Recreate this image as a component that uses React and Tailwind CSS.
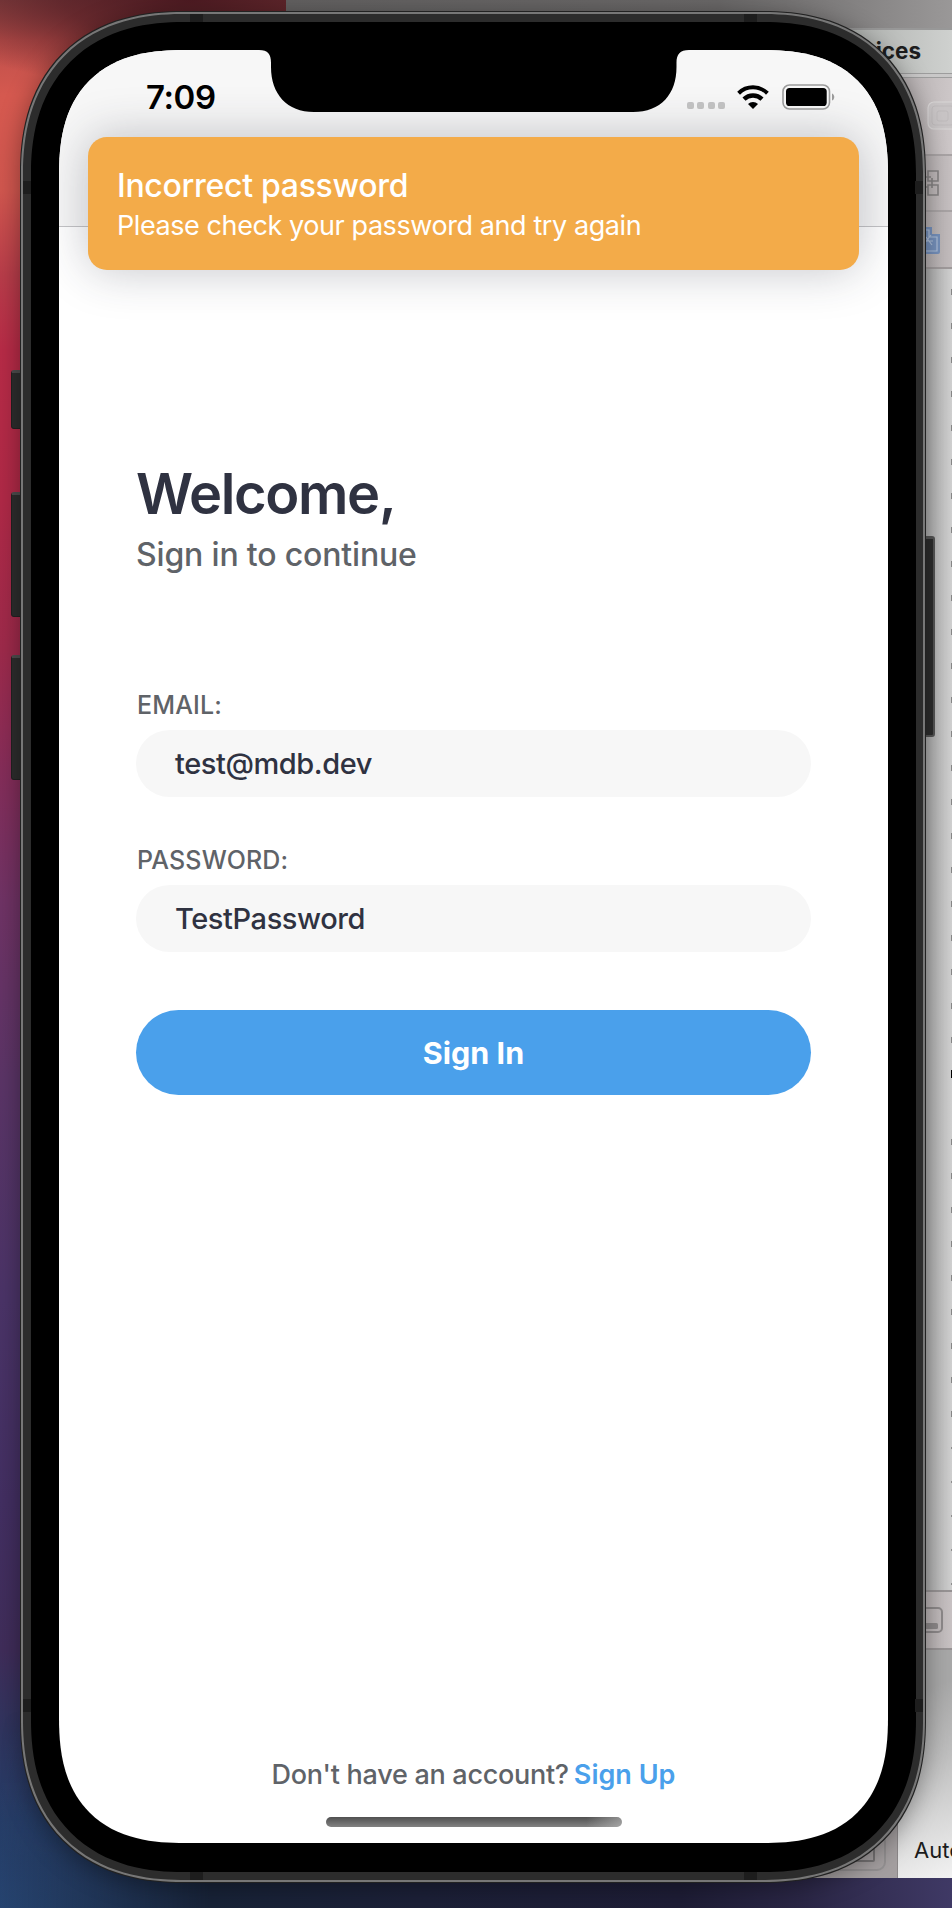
const GUTTER_ROWS = Array.from({ length: 39 }, (_, i) => i);

function Desktop() {
  return (
    <div className="absolute inset-0 bg-[linear-gradient(180deg,#8a4444_0px,#bd4f4b_40px,#d5594f_95px,#d2574f_190px,#b93d4a_275px,#b82b47_350px,#b02947_500px,#9e2a4b_650px,#852d59_770px,#703365_900px,#5b3567_1080px,#4b3468_1300px,#432f62_1500px,#402d5a_1650px,#30355f_1730px,#263d67_1820px,#264470_1908px)]">
      <div className="h-full w-full bg-[radial-gradient(ellipse_280px_90px_at_190px_0px,#4e1b22_0%,#4e1b22b0_45%,#4e1b2200_100%)]" />
      <div className="absolute inset-x-0 bottom-0 h-[200px] bg-[linear-gradient(90deg,#18233800_0px,#182338_210px,#1c2038_420px,#1e1d36_680px,#2a2645_800px,#3f3965_952px)] [mask-image:linear-gradient(180deg,transparent,black_75%)]" />
    </div>
  );
}

function EditorWindow() {
  return (
    <div className="absolute left-[286px] top-0 flex h-[1878px] w-[666px] flex-col overflow-hidden bg-[#d6d6d6] font-['Inter','Liberation_Sans',sans-serif]">
      <div className="h-[30px] shrink-0 border-b-2 border-[#989898] bg-[linear-gradient(90deg,#636161_0%,#6a6868_65%,#838181_85%,#9a9898_100%)]" />
      <div className="flex h-[44px] shrink-0 items-center justify-end border-b border-[#9d9d9d] bg-[linear-gradient(90deg,#a5a8a5_80%,#cfd1cf_100%)] pb-[2px] pr-[31px] text-[22.5px] font-bold text-[#1d1d1d]">
        Devices
      </div>
      <div className="h-[4px] shrink-0 border-b border-[#9d9d9d] bg-[#c9c8c8]" />
      <div className="flex h-[78px] shrink-0 items-center justify-end border-b-2 border-[#a8a3a4] bg-[linear-gradient(90deg,#a9a3a4_88%,#cdc7c8_100%)]">
        <svg className="h-[30px] w-[26px]" viewBox="0 0 26 30" fill="none" stroke="#d8d5d5">
          <rect x="2" y="1" width="30" height="27" rx="6" strokeWidth="1.2" fill="#c8c4c5" />
          <rect x="6" y="5" width="22" height="19" rx="3" stroke="#bebabb" />
          <rect x="11" y="10" width="11" height="10" rx="2" stroke="#bebabb" />
        </svg>
      </div>
      <div className="flex h-[56px] shrink-0 items-center justify-end border-b-2 border-[#a8a3a4] bg-[linear-gradient(90deg,#a9a3a4_92%,#c6c0c1_100%)] pr-[13px]">
        <svg className="h-[26px] w-[16px]" viewBox="0 0 16 26" fill="none" stroke="#858283" strokeWidth="1.6">
          <path d="M5 1h10v10H5zM5 15h10v10H5zM9 8v10M0 7h8M0 17h5" />
        </svg>
      </div>
      <div className="flex h-[57px] shrink-0 items-center justify-end border-b-2 border-[#9f9a9b] bg-[linear-gradient(90deg,#a9a3a4_92%,#c2bcbd_100%)] pr-[12px]">
        <svg className="h-[28px] w-[18px]" viewBox="0 0 18 28">
          <path d="M0 1h10v7h8v18a2 2 0 0 1-2 2H0z" fill="#7590bb" />
          <path d="M0 4h7v7h8v14H0M2 18l7-9M4 11l6 8M1 15h10" fill="none" stroke="#aebfd9" strokeWidth="1.2" />
        </svg>
      </div>
      <div className="flex h-[1321px] shrink-0 flex-col items-end bg-[linear-gradient(90deg,#a8a8a8_640px,#b4b4b4_646px,#d0d0d0_666px)] pt-[6px]">
        {GUTTER_ROWS.map((i) => (
          <div key={i} className="flex h-[34px] w-[1px] shrink-0 items-center">
            <div className={i === 23 ? "h-[8px] w-full bg-black" : i === 24 ? "h-0" : i > 33 ? "h-[2px] w-full bg-[#8f8f8f]" : "h-[6px] w-full bg-[#868686]"} />
          </div>
        ))}
      </div>
      <div className="flex h-[60px] shrink-0 items-center justify-end border-y-2 border-[#979394] bg-[linear-gradient(90deg,#a8a2a3_92%,#c8c2c3_100%)] pr-[9px]">
        <svg className="h-[26px] w-[32px]" viewBox="0 0 32 26">
          <rect x="1" y="1" width="30" height="24" rx="4" fill="none" stroke="#8d898a" strokeWidth="2" />
          <rect x="5" y="16" width="22" height="6" rx="1.5" fill="#8d898a" />
        </svg>
      </div>
      <div className="flex grow bg-[linear-gradient(90deg,#a8a8a8_640px,#dcdcdc_666px)]">
        <div className="flex w-[612px] shrink-0 items-end justify-end border-r border-[#8b8788] bg-[#a49fa0] pb-[7px] pr-[11px]">
          <div className="flex h-[38px] w-[60px] items-center justify-end rounded-[9px] border-2 border-[#939091] pr-[9px]">
            <div className="h-[20px] w-[24px] rounded-[2px] border-2 border-[#777475]" />
          </div>
        </div>
        <div className="flex min-w-0 grow items-end overflow-hidden whitespace-nowrap bg-[linear-gradient(160deg,#a8a8a8_20%,#bfbfbf_50%,#f2f2f2_100%)] pb-[13px] pl-[16px] text-[22px] leading-[30px] text-[#1b1b1b]">
          Auto
        </div>
      </div>
    </div>
  );
}

function StatusBar() {
  return (
    <div className="flex h-[94px] items-center pl-[87px] pr-[53px]">
      <div className="text-[33px] font-semibold leading-[40px] tracking-[-0.4px] text-black">7:09</div>
      <div className="ml-auto flex items-center">
        <div className="mt-[17px] flex gap-[3.4px]">
          <div className="h-[7px] w-[7px] rounded-[2px] bg-[#c4c4c4]" />
          <div className="h-[7px] w-[7px] rounded-[2px] bg-[#c4c4c4]" />
          <div className="h-[7px] w-[7px] rounded-[2px] bg-[#c4c4c4]" />
          <div className="h-[7px] w-[7px] rounded-[2px] bg-[#c4c4c4]" />
        </div>
        <svg className="ml-[12px] h-[24px] w-[32px]" viewBox="0 0 32 24" fill="none" stroke="#000">
          <path d="M1.6 8.2a20.6 20.6 0 0 1 28.8 0" strokeWidth="4" />
          <path d="M7 14.200a12.900 12.900 0 0 1 18 0" strokeWidth="4.4" />
          <path d="M11 18.900a7.200 7.200 0 0 1 10 0L16 24z" fill="#000" stroke="none" />
        </svg>
        <svg className="ml-[13px] h-[26px] w-[53px]" viewBox="0 0 53 26">
          <rect x="1" y="1" width="46.5" height="24" rx="6.5" fill="none" stroke="#9c9c9c" strokeWidth="1.6" />
          <rect x="4" y="4" width="40.7" height="18" rx="3.6" fill="#000" />
          <path d="M50 9.5c3 1 3 6 0 7z" fill="#9c9c9c" />
        </svg>
      </div>
    </div>
  );
}

function Notch() {
  return (
    <svg className="absolute left-[200px] top-[-1px] h-[63px] w-[430px]" viewBox="0 0 430 63">
      <path d="M0 0H430V1C421 1 417.500 5 417.500 14V18C417.500 45 402 63 374 63H55C28 63 12 45 12 18V14C12 5 9 1 0 1Z" fill="#000" />
    </svg>
  );
}

function Toast() {
  return (
    <div className="absolute left-[29px] top-[87px] flex h-[133px] w-[771px] flex-col rounded-[19px] bg-[#f3ab49] pl-[29px] pt-[29px] text-white shadow-[0_0_48px_rgba(40,42,62,0.28)]">
      <div className="text-[32px] font-medium leading-[40px] tracking-[-0.3px]">Incorrect password</div>
      <div className="text-[27px] leading-[40px] tracking-[-0.42px]">Please check your password and try again</div>
    </div>
  );
}

function Field({ label, value }) {
  return (
    <div className="flex flex-col">
      <div className="h-[40px] pl-px text-[25px] font-medium leading-[30px] tracking-[0.15px] text-[#5f6368]">{label}</div>
      <div className="flex h-[67px] items-center rounded-full bg-[#f7f7f7] pl-[39px] text-[29px] font-medium tracking-[-0.42px] text-[#2f3241]">
        {value}
      </div>
    </div>
  );
}

function Screen() {
  return (
    <div className="relative flex h-full flex-col overflow-hidden rounded-[126px] bg-white font-['Inter','Liberation_Sans',sans-serif] [corner-shape:superellipse(1.32)]">
      <div className="h-[177px] shrink-0 border-b border-[#c4c4c6] bg-[#f7f7f7]">
        <StatusBar />
      </div>
      <div className="flex grow flex-col px-[77px]">
        <div className="mt-[232px] text-[56px] font-semibold leading-[70px] tracking-[-1.35px] text-[#2f3241]">Welcome,</div>
        <div className="mt-[6px] text-[32px] font-medium leading-[40px] tracking-[-0.17px] text-[#5f6368]">Sign in to continue</div>
        <div className="mt-[115px] flex flex-col gap-[48px]">
          <Field label="EMAIL:" value="test@mdb.dev" />
          <Field label="PASSWORD:" value="TestPassword" />
        </div>
        <button className="mt-[58px] h-[85px] rounded-full bg-[#4aa0eb] text-[30.5px] font-bold tracking-[0px] text-white">Sign In</button>
        <div className="mt-auto flex justify-center gap-[5px] whitespace-nowrap pb-[24px] text-[27px] leading-[36px]">
          <span className="font-medium tracking-[-0.28px] text-[#5f6368]">Don't have an account?</span>
          <span className="font-semibold tracking-[0px] text-[#4aa0eb]">Sign Up</span>
        </div>
        <div className="mx-auto mb-[16px] h-[10px] w-[296px] rounded-full bg-[linear-gradient(90deg,transparent_88%,#c0c0c090_100%),linear-gradient(180deg,#505050,#828282)]" />
      </div>
      <Toast />
      <Notch />
    </div>
  );
}

function Phone() {
  return (
    <>
      <div className="absolute left-[11px] top-[370px] h-[59px] w-[14px] rounded-[3px] border border-t-[3px] border-[#222] border-t-[#4d4d4d] bg-[#2d2d2d]" />
      <div className="absolute left-[11px] top-[492px] h-[125px] w-[14px] rounded-[3px] border border-t-[3px] border-[#222] border-t-[#4d4d4d] bg-[#2d2d2d]" />
      <div className="absolute left-[11px] top-[655px] h-[125px] w-[14px] rounded-[3px] border border-t-[3px] border-[#222] border-t-[#4d4d4d] bg-[#2d2d2d]" />
      <div className="absolute left-[921px] top-[536px] h-[201px] w-[14px] rounded-[3px] border-2 border-t-[3px] border-[#555] bg-[#2d2d2d]" />
      <div className="absolute left-[21px] top-[12px] h-[1870px] w-[904px] rounded-[162px] border-2 border-[#777] bg-[#2c2c2c] py-[8px] pl-[8px] pr-[7px] shadow-[0_0_0_1px_#222,0_4px_26px_rgba(0,0,0,0.4)] [corner-shape:superellipse(1.2)]">
        <div className="absolute left-[167px] top-0 h-[8px] w-[13px] bg-[#1d1d1d]" />
        <div className="absolute left-[721px] top-0 h-[8px] w-[13px] bg-[#1d1d1d]" />
        <div className="absolute bottom-0 left-[167px] h-[8px] w-[13px] bg-[#1d1d1d]" />
        <div className="absolute bottom-0 left-[721px] h-[8px] w-[13px] bg-[#1d1d1d]" />
        <div className="absolute left-0 top-[167px] h-[13px] w-[8px] bg-[#1d1d1d]" />
        <div className="absolute right-0 top-[167px] h-[13px] w-[8px] bg-[#1d1d1d]" />
        <div className="absolute bottom-[168px] left-0 h-[13px] w-[8px] bg-[#1d1d1d]" />
        <div className="absolute bottom-[168px] right-0 h-[13px] w-[8px] bg-[#1d1d1d]" />
        <div className="h-full rounded-[152px] bg-black px-[28px] pb-[29px] pt-[28px] [corner-shape:superellipse(1.2)]">
          <Screen />
        </div>
      </div>
    </>
  );
}

export default function App() {
  return (
    <div className="relative h-[1908px] w-[952px] overflow-hidden">
      <Desktop />
      <EditorWindow />
      <Phone />
    </div>
  );
}
